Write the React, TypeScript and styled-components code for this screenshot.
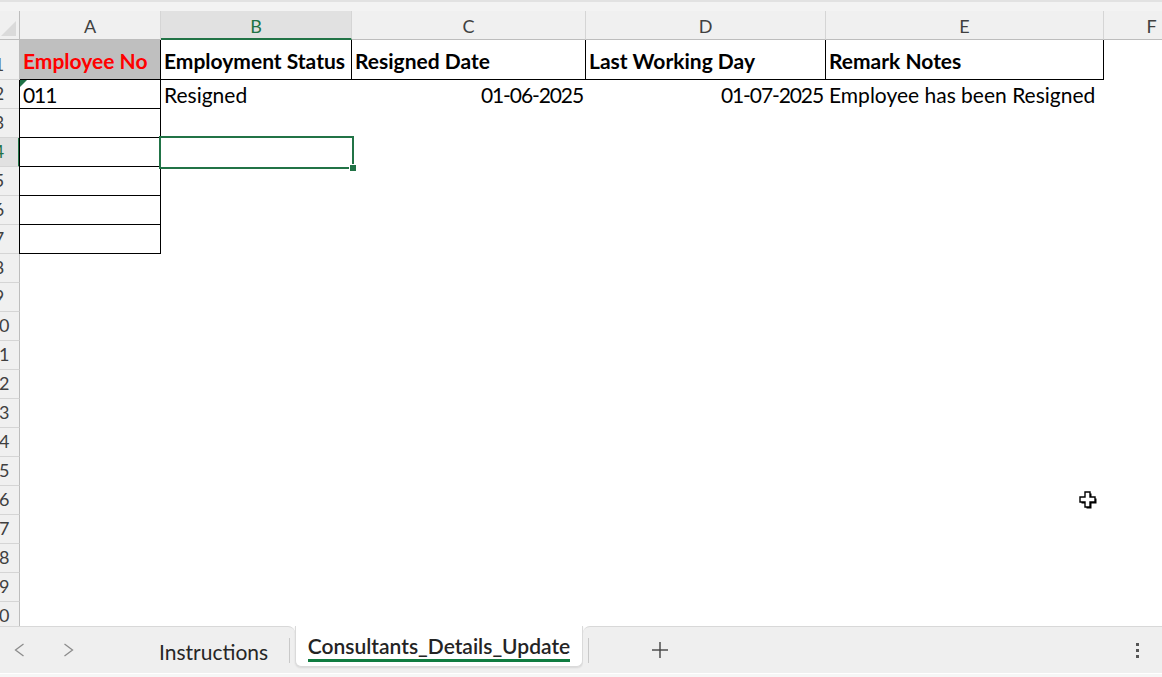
import React from 'react'
import styled, { createGlobalStyle, css } from 'styled-components'

const GREEN = '#217346'
const TAB_GREEN = '#107c41'

const GlobalStyle = createGlobalStyle`
    html, body {
        margin: 0;
        padding: 0;
        background: #fff;
        overflow: hidden;
    }
    body {
        font-family: Lato, 'Liberation Sans', sans-serif;
    }
`

type Align = 'left' | 'right'

type CellDef = {
    text?: string
    bold?: boolean
    color?: string
    fill?: string
    align?: Align
    border?: boolean
    edge?: boolean
    flag?: boolean
    numeric?: boolean
}

const columns = [
    { key: 'A', width: 141 },
    { key: 'B', width: 191 },
    { key: 'C', width: 234 },
    { key: 'D', width: 240 },
    { key: 'E', width: 278 },
    { key: 'F', width: 96 },
]

const emptyRow = (boxed: boolean): CellDef[] => [
    { border: boxed, edge: boxed }, {}, {}, {}, {}, {},
]

const rows: CellDef[][] = [
    [
        { text: 'Employee No', bold: true, color: '#ff0000', fill: '#bfbfbf', border: true },
        { text: 'Employment Status', bold: true, border: true },
        { text: 'Resigned Date', bold: true, border: true },
        { text: 'Last Working Day', bold: true, border: true },
        { text: 'Remark Notes', bold: true, border: true },
        {},
    ],
    [
        { text: '011', border: true, edge: true, flag: true, numeric: true },
        { text: 'Resigned' },
        { text: '01-06-2025', align: 'right', numeric: true },
        { text: '01-07-2025', align: 'right', numeric: true },
        { text: 'Employee has been Resigned' },
        {},
    ],
    emptyRow(true),
    emptyRow(true),
    emptyRow(true),
    emptyRow(true),
    emptyRow(true),
    ...Array.from({ length: 13 }, () => emptyRow(false)),
]

const selected = { row: 3, col: 1 }

const App: React.FC = () => {
    return (
        <Sheet>
            <GlobalStyle />
            <TopStrip />
            <GridArea>
                <Grid>
                    <Corner>
                        <svg width="20" height="28" viewBox="0 0 20 28">
                            <polygon points="1,25 16,25 16,10" fill="#dadada" />
                        </svg>
                    </Corner>
                    {columns.map((c, i) => (
                        <ColHead key={c.key} $active={i === selected.col}>{c.key}</ColHead>
                    ))}
                    {rows.map((row, r) => (
                        <React.Fragment key={r}>
                            <RowHead $active={r === selected.row}>
                                <RowNum>{r + 1}</RowNum>
                            </RowHead>
                            {row.map((cell, c) => (
                                <Cell
                                    key={c}
                                    $bold={cell.bold}
                                    $color={cell.color}
                                    $fill={cell.fill}
                                    $align={cell.align}
                                    $border={cell.border}
                                    $edge={cell.edge}
                                    $numeric={cell.numeric}
                                >
                                    {cell.flag && <ErrorFlag />}
                                    {cell.text}
                                    {r === selected.row && c === selected.col && (
                                        <Selection><FillHandle /></Selection>
                                    )}
                                </Cell>
                            ))}
                        </React.Fragment>
                    ))}
                </Grid>
            </GridArea>
            <TabBar>
                <BarSegment $side="left">
                    <NavGroup>
                        <NavArrow>
                            <svg width="11" height="14" viewBox="0 0 11 14">
                                <polyline points="9.5,1 1.5,7 9.5,13" fill="none" stroke="#8c8c8c" strokeWidth="1.3" />
                            </svg>
                        </NavArrow>
                        <NavArrow>
                            <svg width="11" height="14" viewBox="0 0 11 14">
                                <polyline points="1.5,1 9.5,7 1.5,13" fill="none" stroke="#8c8c8c" strokeWidth="1.3" />
                            </svg>
                        </NavArrow>
                    </NavGroup>
                    <SheetTab>Instructions</SheetTab>
                    <TabDivider $pos="end" />
                </BarSegment>
                <ActiveWrap>
                    <ActiveTab>
                        <ActiveLabel>Consultants_Details_Update</ActiveLabel>
                    </ActiveTab>
                </ActiveWrap>
                <BarSegment $side="right">
                    <TabDivider $pos="start" />
                    <AddSheet>
                        <svg width="18" height="18" viewBox="0 0 18 18">
                            <line x1="9" y1="1" x2="9" y2="17" stroke="#444" strokeWidth="1.4" />
                            <line x1="1" y1="9" x2="17" y2="9" stroke="#444" strokeWidth="1.4" />
                        </svg>
                    </AddSheet>
                    <MoreDots>
                        <span /><span /><span />
                    </MoreDots>
                </BarSegment>
            </TabBar>
            <BottomStrip />
            <CursorMark>
                <svg width="21" height="21" viewBox="0 0 21 21">
                    <polygon points="8,2 13,2 13,7 18,7 18,12 13,12 13,17 8,17 8,12 3,12 3,7 8,7" fill="#000" transform="translate(1.5,1.5)" />
                    <polygon points="8,2 13,2 13,7 18,7 18,12 13,12 13,17 8,17 8,12 3,12 3,7 8,7" fill="#fff" stroke="#000" strokeWidth="1.4" strokeLinejoin="miter" />
                </svg>
            </CursorMark>
        </Sheet>
    )
}

export default App

const Sheet = styled.div`
    position: relative;
    width: 1162px;
    height: 677px;
    display: flex;
    flex-direction: column;
    overflow: hidden;
    background: #fff;
`
const TopStrip = styled.div`
    flex: 0 0 11px;
    box-sizing: border-box;
    background: #f3f3f3;
    border-top: 2px solid #e2e2e2;
`
const GridArea = styled.div`
    flex: 1;
    min-height: 0;
    overflow: hidden;
`
const Grid = styled.div`
    display: grid;
    grid-template-columns: 20px ${columns.map(c => `${c.width}px`).join(' ')};
    grid-template-rows: 29px 40px repeat(19, 29px);
    width: max-content;
`
const headBase = css`
    box-sizing: border-box;
    background: #f0f0f0;
    color: #404040;
    font-family: Lato, 'Liberation Sans', sans-serif;
    font-size: 18px;
`
const Corner = styled.div`
    ${headBase}
    border-right: 1px solid #bdbdbd;
    border-bottom: 1px solid #bdbdbd;
    overflow: hidden;
    svg {
        display: block;
    }
`
const ColHead = styled.div<{ $active?: boolean }>`
    ${headBase}
    display: flex;
    align-items: center;
    justify-content: center;
    padding-top: 2px;
    border-right: 1px solid #d5d5d5;
    border-bottom: 1px solid #bdbdbd;
    ${({ $active }) => $active && css`
        background: #e1e1e1;
        color: ${GREEN};
        border-bottom: 2px solid ${GREEN};
    `}
`
const RowHead = styled.div<{ $active?: boolean }>`
    ${headBase}
    display: flex;
    align-items: flex-end;
    overflow: hidden;
    padding-bottom: 2px;
    border-right: 1px solid #bdbdbd;
    border-bottom: 1px solid #d5d5d5;
    ${({ $active }) => $active && css`
        background: #e1e1e1;
        color: ${GREEN};
        border-right: 2px solid ${GREEN};
    `}
`
const RowNum = styled.span`
    flex: 0 0 40px;
    margin-left: -21px;
    text-align: center;
    line-height: 25px;
`
const Cell = styled.div<{
    $bold?: boolean
    $color?: string
    $fill?: string
    $align?: Align
    $border?: boolean
    $edge?: boolean
    $numeric?: boolean
}>`
    position: relative;
    display: flex;
    align-items: center;
    justify-content: ${({ $align }) => ($align === 'right' ? 'flex-end' : 'flex-start')};
    padding: 0 3px;
    box-sizing: border-box;
    white-space: nowrap;
    font-family: Lato, 'Liberation Sans', sans-serif;
    font-size: 21px;
    font-weight: ${({ $bold }) => ($bold ? 700 : 400)};
    letter-spacing: ${({ $numeric }) => ($numeric ? '-1.1px' : '0')};
    color: ${({ $color }) => $color || '#000'};
    background: ${({ $fill }) => $fill || '#fff'};
    ${({ $border, $edge }) => $border && css`
        box-shadow: inset -1px -1px 0 #000${$edge ? ', -1px 0 0 #000' : ''};
    `}
`
const ErrorFlag = styled.span`
    position: absolute;
    top: 0;
    left: 0;
    width: 0;
    height: 0;
    border-top: 7px solid #1e7145;
    border-right: 7px solid transparent;
`
const Selection = styled.div`
    position: absolute;
    inset: -2px;
    border: 2px solid ${GREEN};
    z-index: 2;
    pointer-events: none;
`
const FillHandle = styled.span`
    position: absolute;
    right: -5px;
    bottom: -5px;
    width: 6px;
    height: 6px;
    background: ${GREEN};
    border: 1px solid #fff;
`
const TabBar = styled.div`
    flex: 0 0 47px;
    display: flex;
    background: #fff;
    font-family: Lato, 'Liberation Sans', sans-serif;
`
const BarSegment = styled.div<{ $side: 'left' | 'right' }>`
    display: flex;
    align-items: center;
    box-sizing: border-box;
    background: #efefef;
    border-top: 1px solid #d8d8d8;
    ${({ $side }) => $side === 'left'
        ? css`
            flex: 0 0 295px;
            border-top-right-radius: 7px;
        `
        : css`
            flex: 1;
            border-top-left-radius: 7px;
        `}
`
const NavGroup = styled.div`
    display: flex;
    align-items: center;
    gap: 38px;
    margin-left: 14px;
`
const NavArrow = styled.div`
    display: flex;
    svg {
        display: block;
    }
`
const SheetTab = styled.div`
    margin-left: 85px;
    padding-top: 3px;
    font-size: 21px;
    color: #262626;
`
const TabDivider = styled.span<{ $pos: 'start' | 'end' }>`
    width: 1px;
    height: 25px;
    background: #c9c9c9;
    ${({ $pos }) => $pos === 'end' ? css`margin: 1px 5px 0 auto;` : css`margin: 1px 0 0 5px;`}
`
const ActiveWrap = styled.div`
    flex: 0 0 288px;
    display: flex;
    background: #efefef;
    padding-bottom: 6px;
`
const ActiveTab = styled.div`
    flex: 1;
    display: flex;
    justify-content: center;
    align-items: flex-start;
    padding-top: 8px;
    box-sizing: border-box;
    background: #fff;
    border: 1px solid #dadada;
    border-top: none;
    border-radius: 0 0 6px 6px;
    box-shadow: 0 1px 2px rgba(0, 0, 0, 0.1);
`
const ActiveLabel = styled.span`
    font-size: 21px;
    font-weight: 600;
    color: #242424;
    line-height: 24px;
    padding-bottom: 1px;
    border-bottom: 3px solid ${TAB_GREEN};
`
const AddSheet = styled.div`
    display: flex;
    margin-left: 62px;
    svg {
        display: block;
    }
`
const MoreDots = styled.div`
    display: flex;
    flex-direction: column;
    gap: 3px;
    margin: 0 23px 0 auto;
    span {
        width: 3px;
        height: 3px;
        background: #555;
    }
`
const BottomStrip = styled.div`
    flex: 0 0 4px;
    background: #f6f6f6;
    border-top: 1px solid #fff;
    box-sizing: border-box;
`
const CursorMark = styled.div`
    position: absolute;
    left: 1077px;
    top: 490px;
    pointer-events: none;
    svg {
        display: block;
    }
`
